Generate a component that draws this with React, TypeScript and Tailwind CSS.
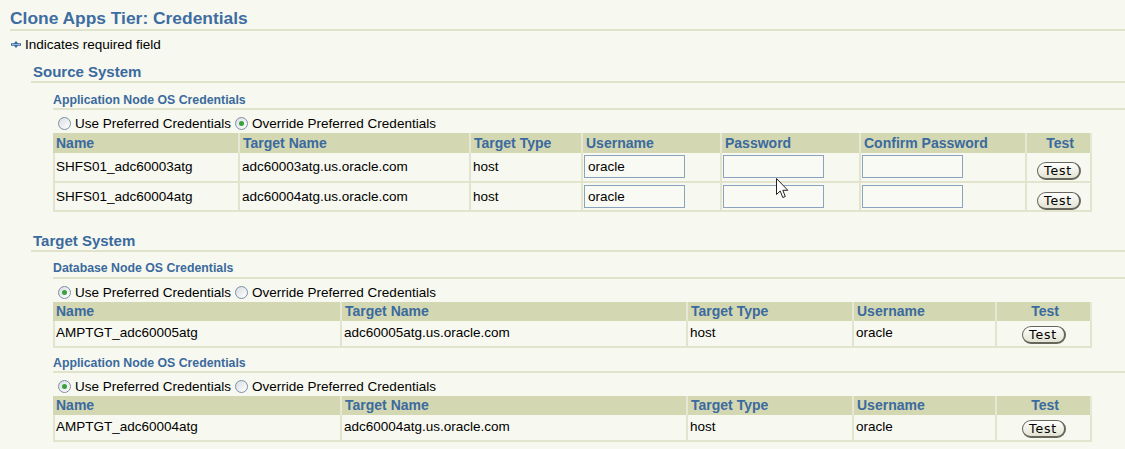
import React from "react";

function Radio({ checked }: { checked: boolean }) {
  return (
    <span className="inline-flex w-[13px] h-[13px] shrink-0 rounded-full border border-[#7d8fa3] bg-linear-to-br from-[#d9dee4] to-white items-center justify-center">
      {checked && <span className="w-[5px] h-[5px] rounded-full bg-[#39a139]" />}
    </span>
  );
}

function TestButton() {
  return (
    <button className="w-[44px] h-[18px] rounded-full border border-[#66665a] border-r-[2px] border-b-[2px] bg-linear-to-b from-white to-[#e3e3d3] text-[12.5px] leading-[14px] font-['DejaVu_Sans',sans-serif] tracking-[0.8px] text-black flex items-center justify-center">
      Test
    </button>
  );
}

function Input({ value }: { value?: string }) {
  return (
    <div className="w-[101px] h-[23px] border border-[#8aa4c0] bg-[#fafaf4] pl-[3px] text-[13.5px] leading-[21px] text-black">
      {value}
    </div>
  );
}

function RadioRow({ useChecked }: { useChecked: boolean }) {
  return (
    <div className="h-[23px] pt-[4px] flex items-center pl-[5px] text-[13.5px] leading-[15px] text-black">
      <div className="flex items-center h-[19px]">
        <Radio checked={useChecked} />
        <span className="ml-[4px] mr-[4px]">Use Preferred Credentials</span>
        <Radio checked={!useChecked} />
        <span className="ml-[4px]">Override Preferred Credentials</span>
      </div>
    </div>
  );
}

const thBase =
  "bg-[#d3d7b2] text-[#3a6a9e] font-bold text-[14px] pl-[3px] border-r-2 border-[#e6e8d4] whitespace-nowrap overflow-hidden";
const tdBase =
  "border-r-2 border-b-2 border-[#e2e4cd] text-[13.5px] leading-[15px] text-black whitespace-nowrap overflow-hidden";

function SubHeader({ title, cls }: { title: string; cls: string }) {
  return (
    <div className={`${cls} border-b-2 border-[#e0e2cb] text-[12.3px] leading-[15px] font-bold text-[#3a6a9e] whitespace-nowrap`}>
      {title}
    </div>
  );
}

function SectionHeader({ title, cls }: { title: string; cls: string }) {
  return (
    <div className={`${cls} border-b-2 border-[#e0e2cb] pl-[2px] text-[15px] leading-[18px] font-bold text-[#3a6a9e]`}>
      {title}
    </div>
  );
}

function SmallTable({ name, target }: { name: string; target: string }) {
  return (
    <div className="w-[1039px] grid grid-cols-[289px_346px_166px_143px_95px]">
      <div className={`${thBase} h-[19px] leading-[19px]`}>Name</div>
      <div className={`${thBase} h-[19px] leading-[19px]`}>Target Name</div>
      <div className={`${thBase} h-[19px] leading-[19px]`}>Target Type</div>
      <div className={`${thBase} h-[19px] leading-[19px]`}>Username</div>
      <div className={`${thBase} h-[19px] leading-[19px] text-center pl-0 border-r-0`}>Test</div>
      <div className={`${tdBase} border-l-2 h-[27px] pt-[4px] pl-[1px]`}>{name}</div>
      <div className={`${tdBase} h-[27px] pt-[4px] pl-[2px]`}>{target}</div>
      <div className={`${tdBase} h-[27px] pt-[4px] pl-[2px]`}>host</div>
      <div className={`${tdBase} h-[27px] pt-[4px] pl-[2px]`}>oracle</div>
      <div className={`${tdBase} h-[27px] pt-[5px] flex justify-center`}>
        <TestButton />
      </div>
    </div>
  );
}

export default function App() {
  const rows = [
    { name: "SHFS01_adc60003atg", target: "adc60003atg.us.oracle.com", h: "h-[30px]" },
    { name: "SHFS01_adc60004atg", target: "adc60004atg.us.oracle.com", h: "h-[29px]" },
  ];
  return (
    <div className="relative w-[1125px] h-[449px] overflow-hidden bg-[#f7f8ef] font-['Liberation_Sans',Arial,sans-serif] pl-[10px]">
      {/* Title */}
      <div className="h-[31px] pt-[8px] border-b-2 border-[#e0e2cb]">
        <h1 className="text-[17.4px] leading-[20px] font-bold text-[#3d6da2] whitespace-nowrap">
          Clone Apps Tier: Credentials
        </h1>
      </div>
      {/* Required */}
      <div className="h-[28px] flex items-center text-[13.5px] text-black">
        <svg width="10" height="7" viewBox="0 0 10 7" className="ml-[1px] mr-[4px] mt-[-1px]">
          <path d="M0 2.2 L3 2.2 L5 0 L7 2.2 L10 2.2 L10 4.8 L7 4.8 L5 7 L3 4.8 L0 4.8 Z" fill="#3d6da2" />
          <rect x="1" y="3" width="8" height="1" fill="#9db6d3" />
        </svg>
        <span>Indicates required field</span>
      </div>

      {/* Source System */}
      <div className="ml-[21px]">
        <SectionHeader title="Source System" cls="h-[24px] pt-[4px]" />
        <div className="ml-[22px]">
          <SubHeader title="Application Node OS Credentials" cls="h-[27px] pt-[10px]" />
          <RadioRow useChecked={false} />
          <div className="w-[1039px] grid grid-cols-[187px_231px_112px_139px_139px_166px_65px]">
            {["Name", "Target Name", "Target Type", "Username", "Password", "Confirm Password"].map((h) => (
              <div key={h} className={`${thBase} h-[20px] leading-[20px]`}>
                {h}
              </div>
            ))}
            <div className={`${thBase} h-[20px] leading-[20px] text-center pl-0 border-r-0`}>Test</div>
            {rows.map((r) => (
              <React.Fragment key={r.name}>
                <div className={`${tdBase} border-l-2 ${r.h} pt-[6px] pl-[1px]`}>{r.name}</div>
                <div className={`${tdBase} ${r.h} pt-[6px] pl-[2px]`}>{r.target}</div>
                <div className={`${tdBase} ${r.h} pt-[6px] pl-[2px]`}>host</div>
                <div className={`${tdBase} ${r.h} pt-[2px] pl-[1px]`}>
                  <Input value="oracle" />
                </div>
                <div className={`${tdBase} ${r.h} pt-[2px] pl-[1px]`}>
                  <Input />
                </div>
                <div className={`${tdBase} ${r.h} pt-[2px] pl-[1px]`}>
                  <Input />
                </div>
                <div className={`${tdBase} ${r.h} pt-[9px] flex justify-center`}>
                  <TestButton />
                </div>
              </React.Fragment>
            ))}
          </div>
        </div>

        {/* Target System */}
        <SectionHeader title="Target System" cls="h-[40px] pt-[20px]" />
        <div className="ml-[22px]">
          <SubHeader title="Database Node OS Credentials" cls="h-[27px] pt-[9px]" />
          <RadioRow useChecked={true} />
          <SmallTable name="AMPTGT_adc60005atg" target="adc60005atg.us.oracle.com" />
          <SubHeader title="Application Node OS Credentials" cls="h-[25px] pt-[8px]" />
          <RadioRow useChecked={true} />
          <SmallTable name="AMPTGT_adc60004atg" target="adc60004atg.us.oracle.com" />
        </div>
      </div>

      {/* mouse cursor */}
      <svg width="13" height="21" viewBox="0 0 13 21" className="absolute left-[776px] top-[178px]">
        <path
          d="M0.5 0.5 L0.5 16.5 L4.2 13 L6.8 19.5 L9.3 18.5 L6.8 12.3 L11.8 12.3 Z"
          fill="white"
          stroke="#222"
          strokeWidth="1"
          strokeLinejoin="miter"
        />
      </svg>
    </div>
  );
}
